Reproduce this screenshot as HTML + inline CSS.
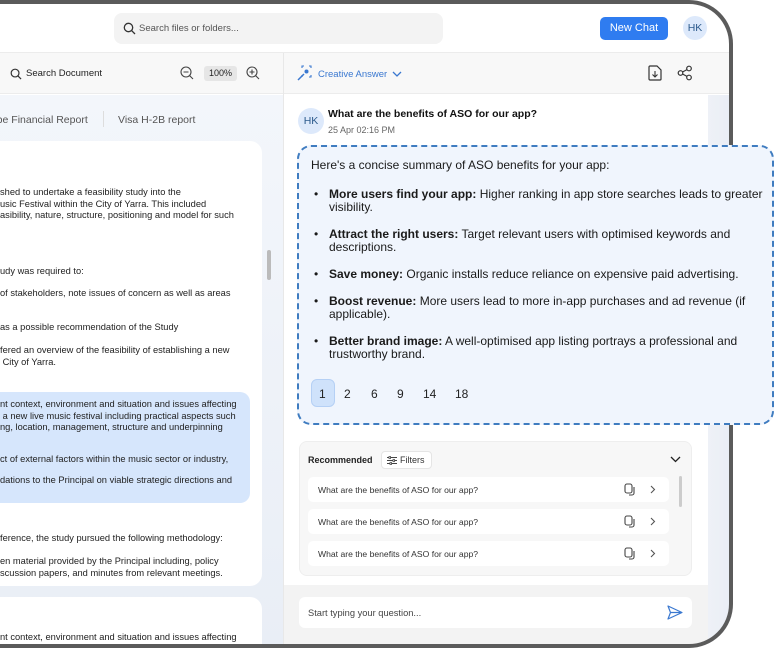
<!DOCTYPE html>
<html><head><meta charset="utf-8"><style>
*{box-sizing:border-box;margin:0;padding:0}
body{width:775px;height:648px;overflow:hidden;background:#fff;font-family:"Liberation Sans",sans-serif;position:relative;color:#1a1a1a}
.clip{position:absolute;left:-10px;top:0;width:743px;height:648px;border-radius:0 44px 44px 0;overflow:hidden}
.in{position:absolute;left:10px;top:0;width:775px;height:648px}
.frame{position:absolute;left:-10px;top:0;width:743px;height:648px;border:4px solid #5b5b5b;border-radius:0 44px 44px 0;z-index:5}
.abs{position:absolute}
.doctext{font-size:9.3px;line-height:11.5px;color:#222;position:absolute;white-space:nowrap}
</style></head><body>
<div class="clip"><div class="in">
 <div class="abs" style="left:0;top:0;width:775px;height:53px;background:#fff;border-bottom:1px solid #ececec"></div>
 <div class="abs" style="left:114px;top:13px;width:329px;height:31px;background:#f3f3f3;border-radius:8px"></div>
 <svg class="abs" style="left:123px;top:22px" width="13" height="13" viewBox="0 0 13 13"><circle cx="5.5" cy="5.5" r="4.2" fill="none" stroke="#333" stroke-width="1.3"/><path d="M8.6 8.6L12 12" stroke="#333" stroke-width="1.3"/></svg>
 <div class="abs" style="left:139px;top:23px;font-size:9.5px;color:#555">Search files or folders...</div>
 <div class="abs" style="left:600px;top:17px;width:68px;height:23px;background:#2f7cf0;border-radius:5px;color:#fff;font-size:11px;text-align:center;line-height:23px">New Chat</div>
 <div class="abs" style="left:683px;top:16px;width:24px;height:24px;background:#dde9fb;border-radius:50%;color:#2c5a8c;font-size:10.5px;text-align:center;line-height:24px">HK</div>
 <div class="abs" style="left:0;top:53px;width:775px;height:41px;background:#f8f8f8;border-bottom:1px solid #ececec"></div>
 <svg class="abs" style="left:10px;top:68px" width="12" height="12" viewBox="0 0 13 13"><circle cx="5.5" cy="5.5" r="4.2" fill="none" stroke="#333" stroke-width="1.3"/><path d="M8.6 8.6L12 12" stroke="#333" stroke-width="1.3"/></svg>
 <div class="abs" style="left:26px;top:68px;font-size:9.5px;color:#222">Search Document</div>
 <svg class="abs" style="left:180px;top:66px" width="14" height="14" viewBox="0 0 14 14"><circle cx="6" cy="6" r="5" fill="none" stroke="#444" stroke-width="1.1"/><path d="M9.6 9.6L13 13M3.5 6h5" stroke="#444" stroke-width="1.1"/></svg>
 <div class="abs" style="left:204px;top:66px;width:33px;height:15px;background:#e6e6e6;border-radius:3px;font-size:9px;text-align:center;line-height:15px;color:#222">100%</div>
 <svg class="abs" style="left:246px;top:66px" width="14" height="14" viewBox="0 0 14 14"><circle cx="6" cy="6" r="5" fill="none" stroke="#444" stroke-width="1.1"/><path d="M9.6 9.6L13 13M3.5 6h5M6 3.5v5" stroke="#444" stroke-width="1.1"/></svg>
 <div class="abs" style="left:283px;top:53px;width:1px;height:595px;background:#e8e8e8"></div>
 <svg class="abs" style="left:297px;top:65px" width="16" height="16" viewBox="0 0 16 16"><path d="M1 15L7 9" stroke="#3a78d0" stroke-width="1.5"/><circle cx="9.5" cy="6.5" r="2" fill="#3a78d0"/><path d="M5 3V1h2M12 1h2v2M14 10v2h-2M5 10v2" stroke="#3a78d0" stroke-width="1.1" fill="none"/></svg>
 <div class="abs" style="left:318px;top:69px;font-size:9.5px;color:#3a78d0">Creative Answer</div>
 <svg class="abs" style="left:392px;top:71px" width="10" height="7" viewBox="0 0 10 7"><path d="M1 1l4 4 4-4" stroke="#3a78d0" stroke-width="1.3" fill="none"/></svg>
 <svg class="abs" style="left:648px;top:65px" width="14" height="16" viewBox="0 0 14 16"><path d="M2 1h7l4 4v9a1 1 0 01-1 1H2a1 1 0 01-1-1V2a1 1 0 011-1z" fill="none" stroke="#333" stroke-width="1.2"/><path d="M7 6v6M4.5 9.5L7 12l2.5-2.5" stroke="#333" stroke-width="1.1" fill="none"/></svg>
 <svg class="abs" style="left:677px;top:65px" width="16" height="16" viewBox="0 0 16 16"><circle cx="12" cy="3.5" r="2.3" fill="none" stroke="#333" stroke-width="1.2"/><circle cx="3.5" cy="8" r="2.3" fill="none" stroke="#333" stroke-width="1.2"/><circle cx="12" cy="12.5" r="2.3" fill="none" stroke="#333" stroke-width="1.2"/><path d="M5.5 7l4.5-2.4M5.5 9l4.5 2.4" stroke="#333" stroke-width="1.2"/></svg>
 <div class="abs" style="left:0;top:95px;width:283px;height:553px;background:linear-gradient(#f3f6fb,#e9eef6)"></div>
 <div class="abs" style="left:-22px;top:114px;font-size:10.5px;color:#555">Adobe Financial Report</div>
 <div class="abs" style="left:103px;top:111px;width:1px;height:16px;background:#ddd"></div>
 <div class="abs" style="left:118px;top:114px;font-size:10.5px;color:#555">Visa H-2B report</div>
 <div class="abs" style="left:-20px;top:141px;width:282px;height:445px;background:#fff;border-radius:12px"></div>
 <div class="abs" style="left:-20px;top:597px;width:282px;height:60px;background:#fff;border-radius:12px"></div>
 <div class="abs" style="left:267px;top:250px;width:4px;height:30px;background:#bbb;border-radius:2px"></div>
 <div class="abs" style="left:-20px;top:392px;width:270px;height:111px;background:#d6e6fc;border-radius:10px"></div>
 <div class="doctext" style="left:0;top:187px">shed to undertake a feasibility study into the<br>usic Festival within the City of Yarra. This included<br>asibility, nature, structure, positioning and model for such</div>
 <div class="doctext" style="left:0;top:266px">udy was required to:</div>
 <div class="doctext" style="left:0;top:288px">of stakeholders, note issues of concern as well as areas</div>
 <div class="doctext" style="left:0;top:322px">as a possible recommendation of the Study</div>
 <div class="doctext" style="left:0;top:345px">fered an overview of the feasibility of establishing a new<br>&nbsp;City of Yarra.</div>
 <div class="doctext" style="left:0;top:399px">nt context, environment and situation and issues affecting<br>&nbsp;a new live music festival including practical aspects such<br>ng, location, management, structure and underpinning</div>
 <div class="doctext" style="left:0;top:454px">ct of external factors within the music sector or industry,</div>
 <div class="doctext" style="left:0;top:475px">dations to the Principal on viable strategic directions and</div>
 <div class="doctext" style="left:0;top:533px">ference, the study pursued the following methodology:</div>
 <div class="doctext" style="left:0;top:556px">en material provided by the Principal including, policy<br>scussion papers, and minutes from relevant meetings.</div>
 <div class="doctext" style="left:0;top:632px">nt context, environment and situation and issues affecting</div>
 <div class="abs" style="left:284px;top:95px;width:424px;height:490px;background:#fff"></div>
 <div class="abs" style="left:708px;top:95px;width:67px;height:553px;background:linear-gradient(90deg,#eef1f7,#e2e7f2)"></div>
 <div class="abs" style="left:298px;top:108px;width:26px;height:26px;background:#dde9fb;border-radius:50%;color:#2c5a8c;font-size:10.5px;text-align:center;line-height:26px">HK</div>
 <div class="abs" style="left:328px;top:108px;font-size:10.5px;font-weight:bold;color:#111">What are the benefits of ASO for our app?</div>
 <div class="abs" style="left:328px;top:125px;font-size:9px;color:#666">25 Apr 02:16 PM</div>
 <div class="abs" style="left:284px;top:585px;width:424px;height:63px;background:#f3f3f3"></div>
 <div class="abs" style="left:299px;top:597px;width:393px;height:31px;background:#fff;border-radius:6px"></div>
 <div class="abs" style="left:308px;top:608px;font-size:9.3px;color:#444">Start typing your question...</div>
 <svg class="abs" style="left:667px;top:605px" width="16" height="15" viewBox="0 0 16 15"><path d="M1 1l14 6.5L1 14l2.5-6.5z M3.5 7.5H15" fill="none" stroke="#3a78d0" stroke-width="1.2" stroke-linejoin="round"/></svg>
 <div class="abs" style="left:299px;top:441px;width:393px;height:135px;background:#f7f7f7;border:1px solid #eee;border-radius:8px"></div>
 <div class="abs" style="left:308px;top:455px;font-size:9px;font-weight:bold;color:#222">Recommended</div>
 <div class="abs" style="left:381px;top:451px;width:51px;height:18px;background:#fff;border:1px solid #e5e5e5;border-radius:4px;font-size:9px;color:#333;line-height:16px;padding-left:18px">Filters</div>
 <svg class="abs" style="left:387px;top:456px" width="10" height="9" viewBox="0 0 10 9"><path d="M0 1.5h10M0 4.5h10M0 7.5h10" stroke="#444" stroke-width=".9"/><rect x="2" y="0.3" width="1.5" height="2.4" fill="#fff" stroke="#444" stroke-width=".7"/><rect x="6" y="3.3" width="1.5" height="2.4" fill="#fff" stroke="#444" stroke-width=".7"/><rect x="3" y="6.3" width="1.5" height="2.4" fill="#fff" stroke="#444" stroke-width=".7"/></svg>
 <svg class="abs" style="left:670px;top:456px" width="11" height="7" viewBox="0 0 11 7"><path d="M1 1l4.5 4.5L10 1" stroke="#222" stroke-width="1.3" fill="none"/></svg>
 <div class="abs" style="left:679px;top:476px;width:3px;height:31px;background:#ccc;border-radius:2px"></div>
 <div class="abs" style="left:308px;top:477px;width:361px;height:25px;background:#fff;border-radius:5px"></div>
 <div class="abs" style="left:308px;top:509px;width:361px;height:25px;background:#fff;border-radius:5px"></div>
 <div class="abs" style="left:308px;top:541px;width:361px;height:25px;background:#fff;border-radius:5px"></div>
 <div class="abs" style="left:318px;top:485px;font-size:8.6px;color:#333">What are the benefits of ASO for our app?</div>
 <div class="abs" style="left:318px;top:517px;font-size:8.6px;color:#333">What are the benefits of ASO for our app?</div>
 <div class="abs" style="left:318px;top:549px;font-size:8.6px;color:#333">What are the benefits of ASO for our app?</div>
 <svg class="abs" style="left:624px;top:483px" width="12" height="13" viewBox="0 0 12 13"><rect x="1" y="1" width="7" height="9" rx="2" fill="none" stroke="#444" stroke-width="1.1"/><path d="M10 4v6a2 2 0 01-2 2H5" fill="none" stroke="#444" stroke-width="1.1"/></svg>
 <svg class="abs" style="left:624px;top:515px" width="12" height="13" viewBox="0 0 12 13"><rect x="1" y="1" width="7" height="9" rx="2" fill="none" stroke="#444" stroke-width="1.1"/><path d="M10 4v6a2 2 0 01-2 2H5" fill="none" stroke="#444" stroke-width="1.1"/></svg>
 <svg class="abs" style="left:624px;top:547px" width="12" height="13" viewBox="0 0 12 13"><rect x="1" y="1" width="7" height="9" rx="2" fill="none" stroke="#444" stroke-width="1.1"/><path d="M10 4v6a2 2 0 01-2 2H5" fill="none" stroke="#444" stroke-width="1.1"/></svg>
 <svg class="abs" style="left:650px;top:485px" width="6" height="9" viewBox="0 0 6 9"><path d="M1 1l3.5 3.5L1 8" stroke="#555" stroke-width="1.1" fill="none"/></svg>
 <svg class="abs" style="left:650px;top:517px" width="6" height="9" viewBox="0 0 6 9"><path d="M1 1l3.5 3.5L1 8" stroke="#555" stroke-width="1.1" fill="none"/></svg>
 <svg class="abs" style="left:650px;top:549px" width="6" height="9" viewBox="0 0 6 9"><path d="M1 1l3.5 3.5L1 8" stroke="#555" stroke-width="1.1" fill="none"/></svg>
</div></div>
<div class="frame"></div>
<div class="abs" style="z-index:6;left:297px;top:145px;width:477px;height:280px;background:#f0f5fd;border:2px dashed #3f7cc0;border-radius:14px;padding:12px 0 0 12px;font-size:12px;line-height:13.5px;color:#1a1a1a;white-space:nowrap">
 <div>Here's a concise summary of ASO benefits for your app:</div>
 <ul style="list-style:none;margin-top:15px">
  <li style="position:relative;padding-left:18px;margin-bottom:13px"><span style="position:absolute;left:3px">•</span><b>More users find your app:</b> Higher ranking in app store searches leads to greater<br>visibility.</li>
  <li style="position:relative;padding-left:18px;margin-bottom:13px"><span style="position:absolute;left:3px">•</span><b>Attract the right users:</b> Target relevant users with optimised keywords and<br>descriptions.</li>
  <li style="position:relative;padding-left:18px;margin-bottom:13.5px"><span style="position:absolute;left:3px">•</span><b>Save money:</b> Organic installs reduce reliance on expensive paid advertising.</li>
  <li style="position:relative;padding-left:18px;margin-bottom:13px"><span style="position:absolute;left:3px">•</span><b>Boost revenue:</b> More users lead to more in-app purchases and ad revenue (if<br>applicable).</li>
  <li style="position:relative;padding-left:18px"><span style="position:absolute;left:3px">•</span><b>Better brand image:</b> A well-optimised app listing portrays a professional and<br>trustworthy brand.</li>
 </ul>
</div>
<div class="abs" style="z-index:7;left:311px;top:379px;width:24px;height:28px;background:#cfe2fb;border:1px solid #b5d0f5;border-radius:6px"></div>
<div class="abs" style="z-index:7;left:319px;top:387px;font-size:12px;color:#222">1</div>
<div class="abs" style="z-index:7;left:344px;top:387px;font-size:12px;color:#222">2</div>
<div class="abs" style="z-index:7;left:371px;top:387px;font-size:12px;color:#222">6</div>
<div class="abs" style="z-index:7;left:397px;top:387px;font-size:12px;color:#222">9</div>
<div class="abs" style="z-index:7;left:423px;top:387px;font-size:12px;color:#222">14</div>
<div class="abs" style="z-index:7;left:455px;top:387px;font-size:12px;color:#222">18</div>
</body></html>
